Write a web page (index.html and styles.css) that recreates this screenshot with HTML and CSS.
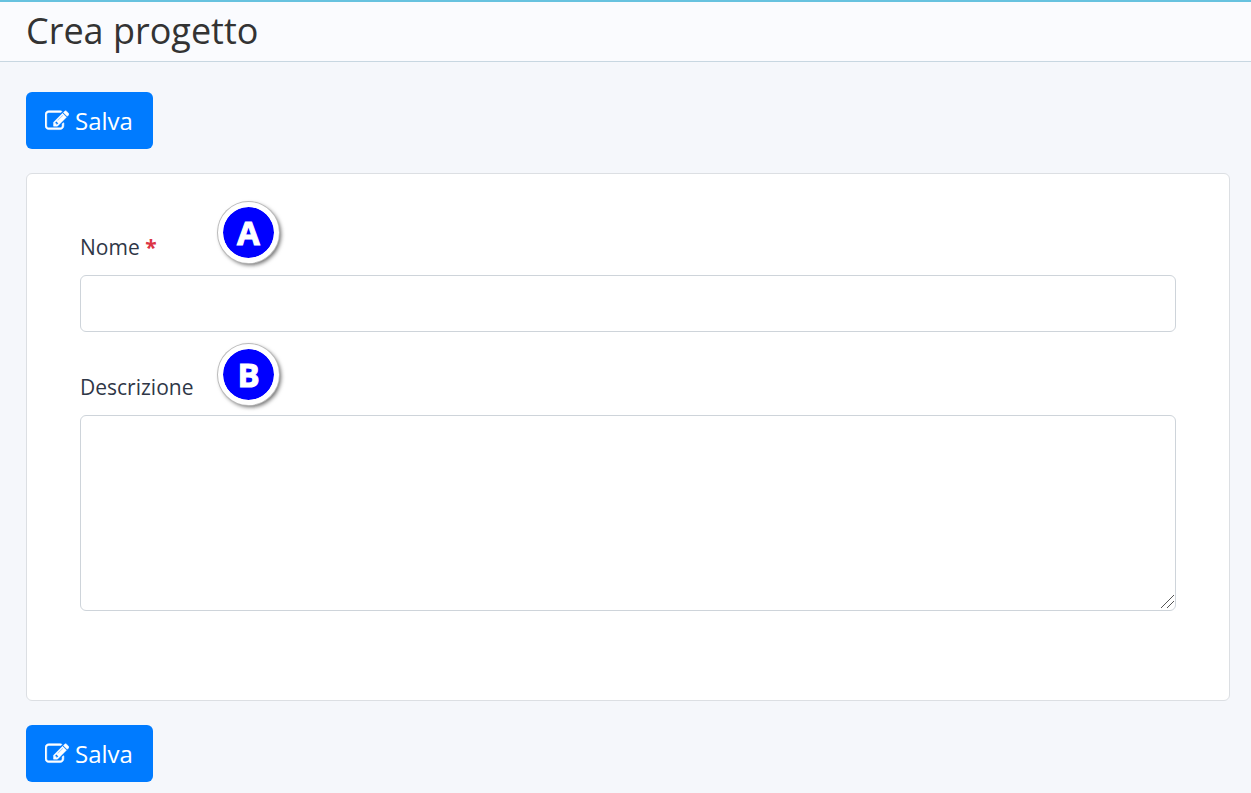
FILE: index.html
```html
<!DOCTYPE html>
<html lang="it">
<head>
    <meta charset="UTF-8">
    <meta name="viewport" content="width=device-width, initial-scale=1.0">
    <title>Crea progetto</title>
    <link rel="stylesheet" href="styles.css">
</head>
<body>

    <!-- Icon shared by the save buttons -->
    <svg class="sprite" aria-hidden="true">
        <symbol id="icon-edit" viewBox="0 0 1792 1792">
            <path d="M888 1184l116-116-152-152-116 116v56h96v96h56zm440-720q-16-16-33 1l-350 350q-17 17-1 33t33-1l350-350q17-17 1-33zm80 594v190q0 119-84.500 203.500t-203.500 84.500h-832q-119 0-203.500-84.500t-84.500-203.500v-832q0-119 84.500-203.500t203.500-84.500h832q63 0 117 25 15 7 18 23 3 17-9 29l-49 49q-14 14-32 8-23-6-45-6h-832q-66 0-113 47t-47 113v832q0 66 47 113t113 47h832q66 0 113-47t47-113v-126q0-13 9-22l64-64q15-15 35-7t20 29zm-96-738l288 288-672 672h-288v-288zm444 132l-92 92-288-288 92-92q28-28 68-28t68 28l152 152q28 28 28 68t-28 68z"/>
        </symbol>
    </svg>

    <header class="header">
        <h1>Crea progetto</h1>
    </header>

    <main class="container">
        <button type="submit" form="projectForm" class="btn"><svg class="icon" aria-hidden="true"><use href="#icon-edit"/></svg>Salva</button>

        <form id="projectForm" class="card">
            <div class="form-group">
                <label for="name">Nome <span class="required">*</span></label>
                <span class="marker marker-a">A</span>
                <input type="text" id="name" name="name" required>
            </div>
            <div class="form-group">
                <label for="description">Descrizione</label>
                <span class="marker marker-b">B</span>
                <textarea id="description" name="description"></textarea>
                <svg class="grip" viewBox="0 0 13 13" aria-hidden="true">
                    <path d="M0 13L13 0M6 13L13 6"/>
                </svg>
            </div>
        </form>

        <button type="submit" form="projectForm" class="btn"><svg class="icon" aria-hidden="true"><use href="#icon-edit"/></svg>Salva</button>
    </main>

</body>
</html>
```
FILE: styles.css
```css
* {
    box-sizing: border-box;
}
body {
    margin: 0;
    font-family: "Open Sans", "Noto Sans", sans-serif;
    font-size: 24px;
    color: #2f3747;
    background-color: #f5f7fb;
}
.sprite {
    display: none;
}
.header {
    padding: 0 26px 1px;
    background-color: #fafbfe;
    border-top: 2px solid #67c2df;
    border-bottom: 1px solid #c8d7e1;
}
.header h1 {
    margin: 0;
    font-size: 36px;
    font-weight: 400;
    line-height: 58px;
    color: #333;
}
.container {
    display: flex;
    flex-direction: column;
    align-items: flex-start;
    gap: 24px;
    padding: 30px 21px 11px 26px;
}
.btn {
    display: flex;
    align-items: center;
    gap: 6px;
    height: 57px;
    padding: 0 20px 0 19px;
    border: 0;
    border-radius: 6px;
    background-color: #007bff;
    color: #fff;
    font-family: inherit;
    font-size: 24px;
    cursor: pointer;
}
.icon {
    width: 24px;
    height: 24px;
    fill: currentColor;
    stroke: currentColor;
    stroke-width: 40;
    overflow: visible;
}
.card {
    width: 100%;
    padding: 53px 53px 89px;
    background-color: #fff;
    border: 1px solid #dcdfe3;
    border-radius: 6px;
}
.form-group {
    position: relative;
}
.form-group + .form-group {
    margin-top: 35px;
}
.form-group label {
    display: block;
    margin-bottom: 8px;
    font-size: 21px;
    font-weight: 500;
    line-height: 40px;
}
.required {
    color: #dc3545;
    font-weight: 700;
}
.form-group input,
.form-group textarea {
    display: block;
    width: 100%;
    height: 57px;
    padding: 8px 18px;
    border: 1px solid #ced4da;
    border-radius: 6px;
    background-color: #fff;
    color: inherit;
    font: inherit;
}
.form-group textarea {
    height: 196px;
    resize: none;
}
.grip {
    position: absolute;
    right: 2px;
    bottom: 3px;
    width: 13px;
    height: 13px;
    fill: none;
    stroke: #555;
}
/* Lettered callouts drawn over the form */
.marker {
    position: absolute;
    left: 138px;
    display: flex;
    align-items: center;
    justify-content: center;
    width: 61px;
    height: 61px;
    border: 5px solid #fff;
    border-radius: 50%;
    background: #00f;
    background-clip: padding-box;
    box-shadow: 0 0 0 1px #bbb, 2px 2px 4px rgba(0, 0, 0, 0.6);
    color: #fff;
    font-size: 33px;
    font-weight: 700;
    line-height: 48px;
    -webkit-text-stroke: 1px #fff;
}
.marker-a {
    top: -25px;
}
.marker-b {
    top: -23px;
}
```
